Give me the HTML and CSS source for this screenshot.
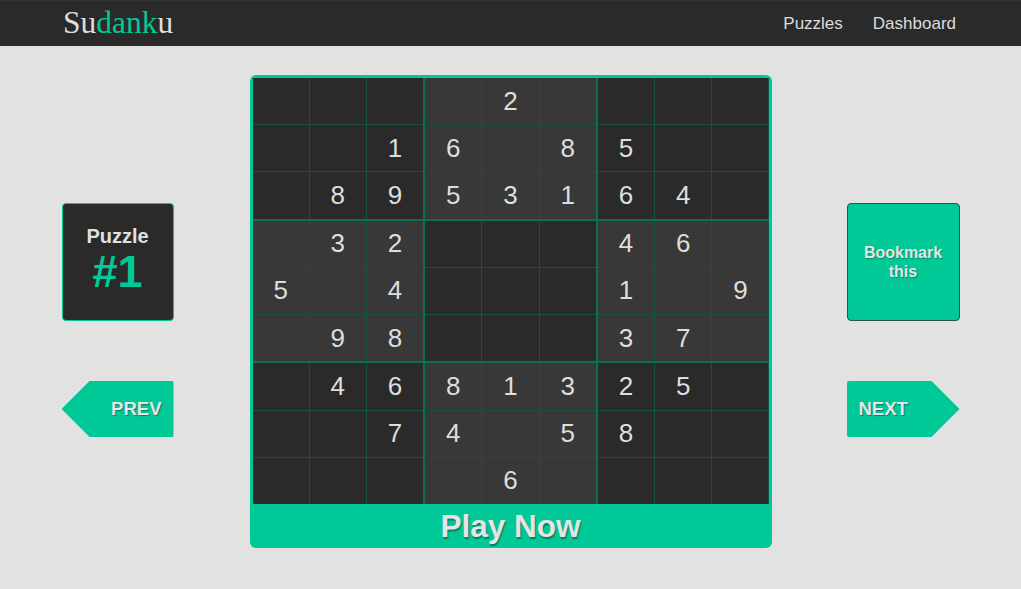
FILE: index.html
```html
<!DOCTYPE html>
<html>
<head>
<meta charset="utf-8">
<title>Sudanku</title>
<link rel="stylesheet" href="styles.css">
</head>
<body>
<header class="topbar">
  <div class="logo">Su<span class="accent">dank</span>u</div>
  <nav class="nav">
    <a class="nav-link" href="#">Puzzles</a>
    <a class="nav-link" href="#">Dashboard</a>
  </nav>
</header>
<main class="main">
  <div class="side side-left">
    <div class="puzzle-card">
      <div class="puzzle-label">Puzzle</div>
      <div class="puzzle-num">#1</div>
    </div>
    <a class="arrow arrow-prev" href="#">PREV</a>
  </div>
  <div class="board-wrap">
    <div class="board">
      <div class="box"><div class="cell"></div><div class="cell"></div><div class="cell"></div><div class="cell"></div><div class="cell"></div><div class="cell">1</div><div class="cell"></div><div class="cell">8</div><div class="cell">9</div></div>
      <div class="box light"><div class="cell"></div><div class="cell">2</div><div class="cell"></div><div class="cell">6</div><div class="cell"></div><div class="cell">8</div><div class="cell">5</div><div class="cell">3</div><div class="cell">1</div></div>
      <div class="box"><div class="cell"></div><div class="cell"></div><div class="cell"></div><div class="cell">5</div><div class="cell"></div><div class="cell"></div><div class="cell">6</div><div class="cell">4</div><div class="cell"></div></div>
      <div class="box light"><div class="cell"></div><div class="cell">3</div><div class="cell">2</div><div class="cell">5</div><div class="cell"></div><div class="cell">4</div><div class="cell"></div><div class="cell">9</div><div class="cell">8</div></div>
      <div class="box"><div class="cell"></div><div class="cell"></div><div class="cell"></div><div class="cell"></div><div class="cell"></div><div class="cell"></div><div class="cell"></div><div class="cell"></div><div class="cell"></div></div>
      <div class="box light"><div class="cell">4</div><div class="cell">6</div><div class="cell"></div><div class="cell">1</div><div class="cell"></div><div class="cell">9</div><div class="cell">3</div><div class="cell">7</div><div class="cell"></div></div>
      <div class="box"><div class="cell"></div><div class="cell">4</div><div class="cell">6</div><div class="cell"></div><div class="cell"></div><div class="cell">7</div><div class="cell"></div><div class="cell"></div><div class="cell"></div></div>
      <div class="box light"><div class="cell">8</div><div class="cell">1</div><div class="cell">3</div><div class="cell">4</div><div class="cell"></div><div class="cell">5</div><div class="cell"></div><div class="cell">6</div><div class="cell"></div></div>
      <div class="box"><div class="cell">2</div><div class="cell">5</div><div class="cell"></div><div class="cell">8</div><div class="cell"></div><div class="cell"></div><div class="cell"></div><div class="cell"></div><div class="cell"></div></div>
    </div>
    <a class="play" href="#">Play Now</a>
  </div>
  <div class="side side-right">
    <a class="bookmark" href="#">Bookmark<br>this</a>
    <a class="arrow arrow-next" href="#">NEXT</a>
  </div>
</main>
</body>
</html>
```
FILE: styles.css
```css
html, body {
  margin: 0;
  padding: 0;
}
body {
  background: #e2e2e2;
  font-family: "Liberation Sans", Arial, sans-serif;
  width: 1021px;
  height: 589px;
  overflow: hidden;
}
a {
  text-decoration: none;
}
.topbar {
  height: 46px;
  background: #2a2a2a;
  border-top: 1px solid #333;
  box-sizing: border-box;
  display: flex;
  align-items: center;
  justify-content: space-between;
  padding: 0 65px 0 63px;
}
.logo {
  font-family: "Liberation Serif", "Times New Roman", serif;
  font-size: 31.5px;
  color: #dedede;
  line-height: 1;
  margin-top: -2px;
}
.accent {
  color: #00c896;
}
.nav {
  display: flex;
  gap: 30px;
}
.nav-link {
  color: #dcdcdc;
  font-size: 17px;
}
.main {
  display: flex;
  justify-content: center;
  align-items: flex-start;
  gap: 76px;
  padding-top: 29px;
}
.side {
  display: flex;
  flex-direction: column;
  gap: 60px;
  padding-top: 128px;
}
.side-left {
  width: 112px;
}
.side-right {
  width: 113px;
  margin-left: -1px;
}
.puzzle-card {
  height: 118px;
  box-sizing: border-box;
  background: #2a2a2a;
  border: 1px solid #00c896;
  border-radius: 4px;
  display: flex;
  flex-direction: column;
  align-items: center;
  justify-content: center;
  font-weight: bold;
  padding-bottom: 5px;
}
.puzzle-label {
  color: #e0e0e0;
  font-size: 20px;
  line-height: 24px;
}
.puzzle-num {
  color: #00c896;
  font-size: 45px;
  line-height: 48px;
}
.arrow {
  height: 56px;
  display: flex;
  align-items: center;
  background: #00c896;
  color: #e6e6e6;
  font-weight: bold;
  font-size: 18.5px;
  text-shadow: 1px 1px 1px rgba(0, 0, 0, 0.35);
  border-radius: 2px;
}
.arrow-prev {
  justify-content: flex-end;
  padding-right: 12px;
  clip-path: polygon(28px 0, 100% 0, 100% 100%, 28px 100%, 0 50%);
}
.arrow-next {
  justify-content: flex-start;
  padding-left: 12px;
  clip-path: polygon(0 0, calc(100% - 28px) 0, 100% 50%, calc(100% - 28px) 100%, 0 100%);
}
.bookmark {
  height: 118px;
  box-sizing: border-box;
  background: #00c896;
  border: 1px solid #2f5249;
  border-radius: 4px;
  display: flex;
  align-items: center;
  justify-content: center;
  text-align: center;
  color: #e6e6e6;
  font-weight: bold;
  font-size: 16px;
  line-height: 19px;
  text-shadow: 1px 1px 1px rgba(0, 0, 0, 0.3);
}
.board-wrap {
  width: 522px;
  box-sizing: border-box;
  background: #00c896;
  padding: 3px 3px 0;
  border-radius: 6px;
  display: flex;
  flex-direction: column;
}
.board {
  height: 426px;
  display: grid;
  grid-template-columns: repeat(3, 1fr);
  grid-template-rows: repeat(3, 1fr);
  gap: 2px;
  background: #0e6e52;
}
.box {
  display: grid;
  grid-template-columns: repeat(3, 1fr);
  grid-template-rows: repeat(3, 1fr);
  gap: 1px;
  background: #17513f;
}
.cell {
  background: #2a2a2a;
  color: #dedede;
  font-size: 26px;
  display: flex;
  align-items: center;
  justify-content: center;
}
.box.light .cell {
  background: #383838;
}
.play {
  height: 44px;
  display: flex;
  align-items: center;
  justify-content: center;
  color: #e4e4e4;
  font-weight: bold;
  font-size: 31.5px;
  text-shadow: 1px 2px 1px rgba(0, 0, 0, 0.35);
}
```
